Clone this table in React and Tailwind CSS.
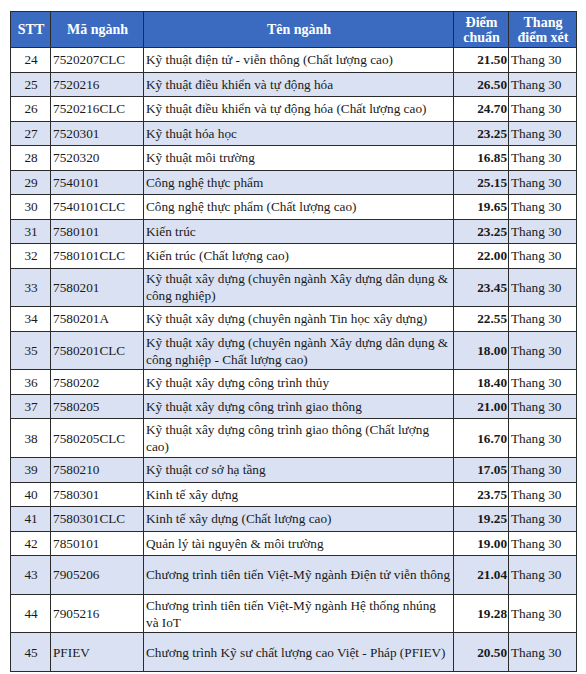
const rows = [
  ["24", "7520207CLC", "Kỹ thuật điện tử - viễn thông (Chất lượng cao)", "21.50"],
  ["25", "7520216", "Kỹ thuật điều khiển và tự động hóa", "26.50"],
  ["26", "7520216CLC", "Kỹ thuật điều khiển và tự động hóa (Chất lượng cao)", "24.70"],
  ["27", "7520301", "Kỹ thuật hóa học", "23.25"],
  ["28", "7520320", "Kỹ thuật môi trường", "16.85"],
  ["29", "7540101", "Công nghệ thực phẩm", "25.15"],
  ["30", "7540101CLC", "Công nghệ thực phẩm (Chất lượng cao)", "19.65"],
  ["31", "7580101", "Kiến trúc", "23.25"],
  ["32", "7580101CLC", "Kiến trúc (Chất lượng cao)", "22.00"],
  ["33", "7580201", "Kỹ thuật xây dựng (chuyên ngành Xây dựng dân dụng & công nghiệp)", "23.45", true],
  ["34", "7580201A", "Kỹ thuật xây dựng (chuyên ngành Tin học xây dựng)", "22.55"],
  ["35", "7580201CLC", "Kỹ thuật xây dựng (chuyên ngành Xây dựng dân dụng & công nghiệp - Chất lượng cao)", "18.00", true],
  ["36", "7580202", "Kỹ thuật xây dựng công trình thủy", "18.40"],
  ["37", "7580205", "Kỹ thuật xây dựng công trình giao thông", "21.00"],
  ["38", "7580205CLC", "Kỹ thuật xây dựng công trình giao thông (Chất lượng cao)", "16.70", true],
  ["39", "7580210", "Kỹ thuật cơ sở hạ tầng", "17.05"],
  ["40", "7580301", "Kinh tế xây dựng", "23.75"],
  ["41", "7580301CLC", "Kinh tế xây dựng (Chất lượng cao)", "19.25"],
  ["42", "7850101", "Quản lý tài nguyên & môi trường", "19.00"],
  ["43", "7905206", "Chương trình tiên tiến Việt-Mỹ ngành Điện tử viễn thông", "21.04", true],
  ["44", "7905216", "Chương trình tiên tiến Việt-Mỹ ngành Hệ thống nhúng\nvà IoT", "19.28", true],
  ["45", "PFIEV", "Chương trình Kỹ sư chất lượng cao Việt - Pháp (PFIEV)", "20.50", true],
];

const cell = "border-[1.5px] border-[#2b2b2b] pl-[2px] pr-[1px] align-middle";

const App = () => {
  return (
    <div className="w-[586px] h-[674px] bg-white pt-[11px] pl-[10px] font-['Liberation_Serif',serif] text-[13.25px] text-[#1a1a1a]">
      <table className="w-[566px] table-fixed border-collapse">
        <colgroup>
          <col className="w-[40px]" />
          <col className="w-[93px]" />
          <col className="w-[310px]" />
          <col className="w-[55px]" />
          <col className="w-[68px]" />
        </colgroup>
        <thead>
          <tr className="h-[36px] bg-[#3b6bc0] text-white font-bold leading-[15px] text-[14px]">
            <th className={`${cell} text-center`}>STT</th>
            <th className={`${cell} text-center`}>Mã ngành</th>
            <th className={`${cell} text-center`}>Tên ngành</th>
            <th className={`${cell} text-center`}>
              Điểm
              <br />
              chuẩn
            </th>
            <th className={`${cell} text-center`}>
              Thang
              <br />
              điểm xét
            </th>
          </tr>
        </thead>
        <tbody>
          {rows.map(([stt, code, name, score, tall], i) => (
            <tr key={stt} className={`${tall ? "h-[38.7px]" : "h-[24.5px]"} ${i % 2 == 1 ? "bg-[#d9e1f2]" : "bg-white"} leading-[17px]`}>
              <td className={`${cell} text-center`}>{stt}</td>
              <td className={cell}>{code}</td>
              <td className={`${cell} whitespace-pre-line`}>{name}</td>
              <td className={`${cell} text-right font-bold`}>{score}</td>
              <td className={cell}>Thang 30</td>
            </tr>
          ))}
        </tbody>
      </table>
    </div>
  );
};

export default App;
